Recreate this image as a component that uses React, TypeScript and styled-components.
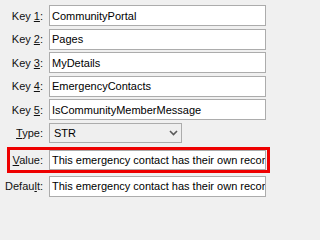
import React from "react"
import styled, { createGlobalStyle } from "styled-components"

const GlobalStyle = createGlobalStyle`
  html, body {
    margin: 0;
    padding: 0;
    background: #f0f0f0;
  }
  body {
    font-family: "Liberation Sans", Arial, sans-serif;
    font-size: 11px;
    color: #000;
  }
`

const Form = styled.div`
  width: 271px;
  height: 202px;
  box-sizing: border-box;
  padding: 5px 5px 0 0;
  display: flex;
  flex-direction: column;
  gap: 2.5px;
  background: #f0f0f0;
  overflow: hidden;
`

const Row = styled.div<{ $highlight?: boolean }>`
  display: grid;
  grid-template-columns: ${(p) => (p.$highlight ? "33px" : "43px")} 1fr;
  column-gap: 6px;
  align-items: center;
  box-sizing: border-box;
  ${(p) =>
    p.$highlight &&
    `
    margin: 2px -4px 0 7px;
    padding-right: 1px;
    border: 3px solid #ee0000;
  `}
`

const Label = styled.label`
  text-align: right;
  white-space: nowrap;
  color: #111;

  u {
    text-decoration: underline;
    text-underline-offset: 1px;
  }
`

const TextBox = styled.div`
  height: 21px;
  box-sizing: border-box;
  border: 1px solid #acacac;
  background: #fff;
  padding: 0 2px;
  display: flex;
  align-items: center;
  white-space: nowrap;
  overflow: hidden;
`

const Combo = styled.div`
  width: 133px;
  height: 20px;
  box-sizing: border-box;
  border: 1px solid #acacac;
  background: #efefef;
  padding: 0 3px 0 4px;
  display: flex;
  align-items: center;
  justify-content: space-between;
`

const Chevron = () => (
  <svg width="9" height="6" viewBox="0 0 9 6">
    <path d="M1 1 L4.5 4.5 L8 1" fill="none" stroke="#5a5a5a" strokeWidth="1.6" />
  </svg>
)

const keys = [
  { n: "1", v: "CommunityPortal" },
  { n: "2", v: "Pages" },
  { n: "3", v: "MyDetails" },
  { n: "4", v: "EmergencyContacts" },
  { n: "5", v: "IsCommunityMemberMessage" },
]

const valueText = "This emergency contact has their own record in the system"

export default function App() {
  return (
    <>
      <GlobalStyle />
      <Form>
        {keys.map((k) => (
          <Row key={k.n}>
            <Label>
              Key <u>{k.n}</u>:
            </Label>
            <TextBox>{k.v}</TextBox>
          </Row>
        ))}
        <Row>
          <Label>
            <u>T</u>ype:
          </Label>
          <Combo>
            <span>STR</span>
            <Chevron />
          </Combo>
        </Row>
        <Row $highlight>
          <Label>
            <u>V</u>alue:
          </Label>
          <TextBox style={{ height: 20 }}>{valueText}</TextBox>
        </Row>
        <Row>
          <Label>
            Defau<u>l</u>t:
          </Label>
          <TextBox>{valueText}</TextBox>
        </Row>
      </Form>
    </>
  )
}
